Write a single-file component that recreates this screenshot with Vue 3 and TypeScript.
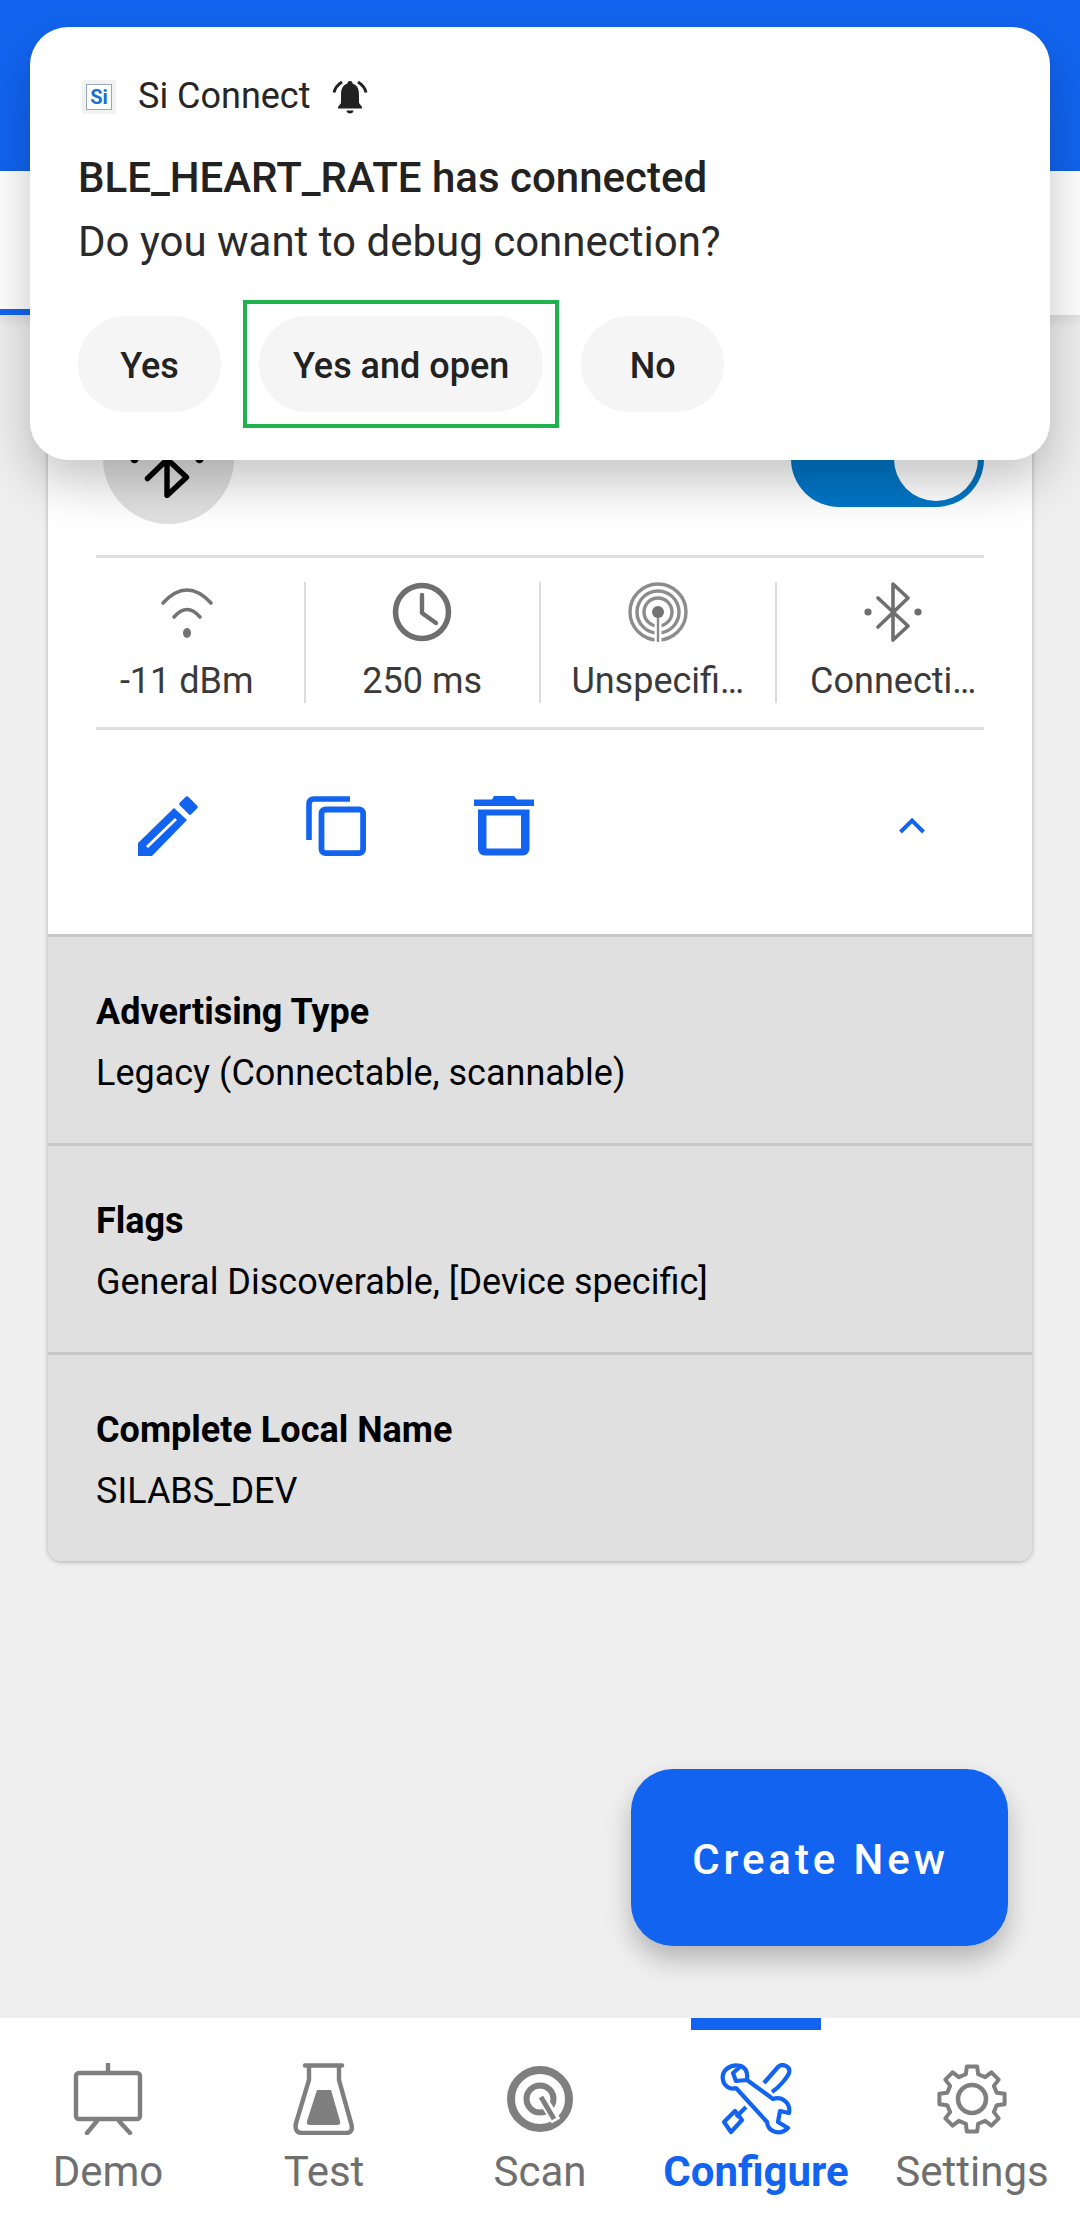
<script setup lang="ts">
const navItems: { key: string; label: string; active?: boolean }[] = [
  { key: 'demo', label: 'Demo' },
  { key: 'test', label: 'Test' },
  { key: 'scan', label: 'Scan' },
  { key: 'configure', label: 'Configure', active: true },
  { key: 'settings', label: 'Settings' },
]

const rows = [
  { title: 'Advertising Type', value: 'Legacy (Connectable, scannable)' },
  { title: 'Flags', value: 'General Discoverable, [Device specific]' },
  { title: 'Complete Local Name', value: 'SILABS_DEV' },
]

function polar(r: number, deg: number): string {
  const a = (deg * Math.PI) / 180
  return `${(36 + r * Math.cos(a)).toFixed(2)} ${(36 + r * Math.sin(a)).toFixed(2)}`
}

const gearPath = (() => {
  const pts: string[] = []
  for (let i = 0; i < 8; i++) {
    const a = i * 45 - 90
    pts.push(polar(25.5, a - 14), polar(33, a - 9), polar(33, a + 9), polar(25.5, a + 14))
  }
  return 'M' + pts.join(' L') + ' Z'
})()
</script>

<template>
  <div class="page">
    <header class="app-bar"></header>
    <div class="tab-strip"><div class="tab-line"></div></div>

    <main class="content">
      <section class="card">
        <div class="top-row">
          <div class="avatar">
            <svg class="bt-big" viewBox="0 0 60 60">
              <path d="M15 16 L45 44 L30 58 V2 L45 16 L15 45" fill="none" stroke="#000" stroke-width="4.2" stroke-linejoin="round" stroke-linecap="round" />
              <circle cx="5" cy="30" r="3.2" fill="#000" />
              <circle cx="55" cy="30" r="3.2" fill="#000" />
            </svg>
          </div>
          <div class="toggle"><div class="knob"></div></div>
        </div>

        <div class="stats-wrap">
          <div class="stats">
            <div class="stat">
              <svg class="stat-icon" viewBox="0 0 60 60">
                <path d="M6 21 Q30 -5 54 21" fill="none" stroke="#737373" stroke-width="3.6" stroke-linecap="round" />
                <path d="M17 35 Q30 20 43 35" fill="none" stroke="#737373" stroke-width="3.6" stroke-linecap="round" />
                <ellipse cx="30" cy="51" rx="4" ry="5" fill="#737373" />
              </svg>
              <span class="stat-text">-11 dBm</span>
            </div>
            <div class="stat">
              <svg class="stat-icon" viewBox="0 0 60 60">
                <circle cx="30" cy="30" r="26.5" fill="none" stroke="#6e6e6e" stroke-width="5.5" />
                <path d="M30 13 V31 L44 41" fill="none" stroke="#6e6e6e" stroke-width="4.4" stroke-linecap="round" stroke-linejoin="round" />
              </svg>
              <span class="stat-text">250 ms</span>
            </div>
            <div class="stat">
              <svg class="stat-icon" viewBox="0 0 60 60">
                <g fill="none" stroke="#8c8c8c" stroke-width="3.4">
                  <circle cx="30" cy="30" r="28" />
                  <circle cx="30" cy="30" r="21" />
                  <circle cx="30" cy="30" r="14" />
                </g>
                <path d="M30 36 V60" stroke="#fff" stroke-width="7" />
                <path d="M30 32 V60" stroke="#8c8c8c" stroke-width="2.4" />
                <circle cx="30" cy="30" r="6" fill="#737373" />
              </svg>
              <span class="stat-text">Unspecifi…</span>
            </div>
            <div class="stat">
              <svg class="stat-icon" viewBox="0 0 60 60">
                <path d="M15 16 L45 44 L30 58 V2 L45 16 L15 45" fill="none" stroke="#6e6e6e" stroke-width="3.6" stroke-linejoin="round" stroke-linecap="round" />
                <circle cx="5" cy="30" r="3.6" fill="#6e6e6e" />
                <circle cx="55" cy="30" r="3.6" fill="#6e6e6e" />
              </svg>
              <span class="stat-text">Connecti…</span>
            </div>
          </div>
        </div>

        <div class="actions">
          <svg class="action" viewBox="0 0 60 60">
            <path fill-rule="evenodd" fill="#1264f0" d="M0 47 L36 12 L49 24 L14 60 H0 Z M8 50 L10 52 L39 24 L37 22 Z" />
            <path d="M43 8 L49 2 L58 11 L52 17 Z" fill="#1264f0" stroke="#1264f0" stroke-width="3.5" stroke-linejoin="round" />
          </svg>
          <svg class="action" viewBox="0 0 60 60">
            <path d="M3 44 V8 Q3 3 8 3 H44" fill="none" stroke="#1264f0" stroke-width="5.6" />
            <rect x="15.5" y="13.5" width="41.6" height="43.6" rx="4" fill="none" stroke="#1264f0" stroke-width="5.8" />
          </svg>
          <svg class="action" viewBox="0 0 60 60">
            <path d="M0 3.5 H18 L20 0 H40 L43 3.5 H60 V10 H0 Z" fill="#1264f0" />
            <path fill-rule="evenodd" fill="#1264f0" d="M4 13.5 H55.5 V53 A6.5 6.5 0 0 1 49 59.5 H10.5 A6.5 6.5 0 0 1 4 53 Z M12.5 19.5 V52.5 H47 V19.5 Z" />
          </svg>
          <svg class="chevron" viewBox="0 0 28 17">
            <path d="M2.5 15 L14 3.5 L25.5 15" fill="none" stroke="#1264f0" stroke-width="4" />
          </svg>
        </div>

        <div v-for="row in rows" :key="row.title" class="detail">
          <div class="detail-title">{{ row.title }}</div>
          <div class="detail-value">{{ row.value }}</div>
        </div>
      </section>

      <button class="fab">Create New</button>
    </main>

    <nav class="nav">
      <div v-for="item in navItems" :key="item.key" class="nav-item" :class="{ active: item.active }">
        <div v-if="item.active" class="nav-indicator"></div>
        <svg class="nav-icon" viewBox="0 0 72 72">
          <template v-if="item.key === 'demo'">
            <g fill="none" stroke="#7f7f7f" stroke-width="4.4" stroke-linecap="round">
              <rect x="4" y="10" width="64" height="46" rx="3" />
              <path d="M36 1 V10" />
              <path d="M25 58 L15 70" />
              <path d="M47 58 L58 70" />
            </g>
          </template>
          <template v-else-if="item.key === 'test'">
            <g fill="none" stroke="#7f7f7f" stroke-width="4.4">
              <path d="M17 2.5 H54" stroke-linecap="round" />
              <path d="M21 3 V17 L8 60 Q6 70 14 70 H58 Q66 70 63 60 L51 17 V3" />
            </g>
            <path d="M29 27 H43 L52 58 Q53 62 49 62 H22 Q18 62 19 58 Z" fill="#7f7f7f" />
          </template>
          <template v-else-if="item.key === 'scan'">
            <circle cx="36" cy="36" r="29" fill="none" stroke="#7f7f7f" stroke-width="8" />
            <circle cx="36" cy="36" r="13.5" fill="none" stroke="#7f7f7f" stroke-width="6" />
            <path d="M38 35 L52 58" stroke="#fff" stroke-width="10" />
            <path d="M37 34 L50 56" stroke="#7f7f7f" stroke-width="5" />
          </template>
          <template v-else-if="item.key === 'configure'">
            <g fill="none" stroke="#1264f0" stroke-width="4.2" stroke-linejoin="round">
              <path d="M21 3 L13 10 L16 18 L27 17 C28 9 26 5 21 3 C10 0 1 8 3 17 C4 23 10 27 16 25 L47 59 C48 69 60 73 68 65 L58 59 L60 48 L69 50 C71 40 62 33 53 36 L27 17" />
              <path d="M44 20 L58 4 C62 0 71 3 69 10 C68 13 60 24 52 29" />
              <path d="M26 44 L16 54 M4 59 L11 69 L22 57 L15 48 Z" />
            </g>
          </template>
          <template v-else>
            <path :d="gearPath" fill="none" stroke="#7f7f7f" stroke-width="4" stroke-linejoin="round" />
            <circle cx="36" cy="36" r="14" fill="none" stroke="#7f7f7f" stroke-width="4.6" />
          </template>
        </svg>
        <span class="nav-label">{{ item.label }}</span>
      </div>
    </nav>

    <aside class="notice">
      <div class="notice-head">
        <div class="app-icon"><span class="app-icon-in">Si</span></div>
        <span class="app-name">Si Connect</span>
        <svg class="bell" viewBox="0 0 36 36">
          <path d="M18 2 C16 2 15.5 3 15.5 4.5 C10.5 6 9 10.5 9 16 V24 L6 28 V29.5 H30 V28 L27 24 V16 C27 10.5 25.5 6 20.5 4.5 C20.5 3 20 2 18 2 Z" fill="#222" />
          <path d="M14.5 31.5 H21.5 C21.5 35.5 14.5 35.5 14.5 31.5 Z" fill="#222" />
          <path d="M10 3 C6 5.5 3 9 2 13.5 M26 3 C30 5.5 33 9 34 13.5" fill="none" stroke="#222" stroke-width="3" />
        </svg>
      </div>
      <h2 class="notice-title">BLE_HEART_RATE has connected</h2>
      <p class="notice-body">Do you want to debug connection?</p>
      <div class="notice-actions">
        <button class="pill">Yes</button>
        <button class="pill pill-marked">Yes and open</button>
        <button class="pill">No</button>
      </div>
    </aside>
  </div>
</template>

<style>
html,
body {
  margin: 0;
  padding: 0;
}
</style>

<style scoped>
.page {
  position: relative;
  width: 1080px;
  height: 2231px;
  display: flex;
  flex-direction: column;
  overflow: hidden;
  background: #f0eff0;
  font-family: Roboto, "Liberation Sans", sans-serif;
}
.app-bar {
  height: 171px;
  flex: none;
  background: #1264f0;
}
.tab-strip {
  height: 144px;
  flex: none;
  position: relative;
  background: #fff;
  display: flex;
  align-items: flex-end;
  box-shadow: 0 4px 14px rgba(0, 0, 0, 0.1);
  z-index: 1;
}
.tab-line {
  width: 216px;
  height: 6px;
  background: #1264f0;
}
.content {
  flex: 1;
  position: relative;
  padding: 30px 48px 0;
}
.card {
  background: #fff;
  border-radius: 14px;
  overflow: hidden;
  box-shadow: 0 1px 5px rgba(0, 0, 0, 0.28);
}
.top-row {
  height: 210px;
  box-sizing: border-box;
  padding: 48px 48px 0 55px;
  display: flex;
  justify-content: space-between;
  align-items: flex-start;
}
.avatar {
  width: 131px;
  height: 131px;
  border-radius: 50%;
  background: #e0e0e0;
  display: flex;
  align-items: center;
  justify-content: center;
}
.bt-big {
  width: 78px;
  height: 78px;
  margin-right: 4px;
}
.toggle {
  margin-top: 18px;
  width: 193px;
  height: 96px;
  box-sizing: border-box;
  padding: 6px;
  border-radius: 48px;
  background: #0077c8;
  display: flex;
  justify-content: flex-end;
}
.knob {
  width: 84px;
  height: 84px;
  border-radius: 50%;
  background: #fff;
}
.stats-wrap {
  margin: 0 48px;
  border-top: 3px solid #dedede;
  border-bottom: 3px solid #dedede;
}
.stats {
  margin: 0 -26px 0 -28px;
  display: grid;
  grid-template-columns: repeat(4, 1fr);
  padding: 24px 0;
}
.stat {
  height: 121px;
  display: flex;
  flex-direction: column;
  align-items: center;
  border-left: 2px solid #dcdcdc;
  box-sizing: border-box;
}
.stat:first-child {
  border-left-color: transparent;
}
.stat-icon {
  width: 60px;
  height: 60px;
  flex: none;
}
.stat-text {
  margin-top: 17px;
  font-size: 36px;
  line-height: 44px;
  color: #3a3a3a;
  white-space: nowrap;
}
.actions {
  height: 204px;
  box-sizing: border-box;
  padding: 66px 106px 0 90px;
  display: flex;
  align-items: flex-start;
  gap: 108px;
}
.action {
  width: 60px;
  height: 60px;
  flex: none;
}
.chevron {
  width: 28px;
  height: 17px;
  margin-top: 21px;
  margin-left: auto;
}
.detail {
  height: 209px;
  box-sizing: border-box;
  border-top: 3px solid #c8c8c8;
  background: #e0e0e0;
  padding: 45px 48px 0;
  color: #000;
}
.detail-title {
  font-size: 36px;
  line-height: 60px;
  font-weight: 700;
}
.detail-value {
  font-size: 36px;
  line-height: 62px;
}
.fab {
  position: absolute;
  left: 631px;
  top: 1454px;
  width: 377px;
  height: 177px;
  padding: 4px 0 0 2px;
  border: 0;
  border-radius: 42px;
  background: #1264f0;
  color: #fff;
  font-family: inherit;
  font-size: 42px;
  font-weight: 500;
  letter-spacing: 3.9px;
  box-shadow: 0 14px 26px rgba(0, 0, 0, 0.24);
}
.nav {
  height: 213px;
  flex: none;
  position: relative;
  background: #fff;
  display: grid;
  grid-template-columns: repeat(5, 216px);
}
.nav-item {
  position: relative;
  padding-top: 45px;
  display: flex;
  flex-direction: column;
  align-items: center;
}
.nav-indicator {
  position: absolute;
  top: 0;
  left: 43px;
  width: 130px;
  height: 12px;
  background: #1264f0;
}
.nav-icon {
  width: 72px;
  height: 72px;
  flex: none;
}
.nav-label {
  margin-top: 12px;
  font-size: 42px;
  line-height: 50px;
  color: #6f6f6f;
  white-space: nowrap;
}
.active .nav-label {
  color: #1264f0;
  font-weight: 700;
}
.notice {
  position: absolute;
  z-index: 3;
  left: 30px;
  top: 27px;
  width: 1020px;
  height: 433px;
  box-sizing: border-box;
  padding: 52px 48px 0;
  border-radius: 38px;
  background: #fff;
  box-shadow: 0 22px 50px rgba(0, 0, 0, 0.23);
}
.notice-head {
  height: 35px;
  display: flex;
  align-items: center;
}
.app-icon {
  margin-left: 4px;
  width: 34px;
  height: 34px;
  flex: none;
  box-sizing: border-box;
  padding: 4px;
  background: #f2f2f2;
  border-radius: 2px;
  display: flex;
}
.app-icon-in {
  flex: 1;
  border: 1px solid #9aa5c0;
  background: #fff;
  color: #1c6fd0;
  font-size: 20px;
  line-height: 24px;
  font-weight: 700;
  text-align: center;
}
.app-name {
  margin-left: 22px;
  font-size: 36px;
  line-height: 35px;
  color: #262626;
}
.bell {
  margin-left: 21px;
  width: 36px;
  height: 36px;
}
.notice-title {
  margin: 39px 0 0;
  font-size: 42px;
  line-height: 50px;
  font-weight: 500;
  color: #222;
}
.notice-body {
  margin: 7px 0 0;
  font-size: 42px;
  line-height: 64px;
  color: #2a2a2a;
}
.notice-actions {
  margin: 42px 0 0;
  display: flex;
  gap: 38px;
}
.pill {
  position: relative;
  height: 96px;
  min-width: 143px;
  padding: 4px 34px 0;
  border: 0;
  border-radius: 48px;
  background: #f5f5f5;
  color: #222;
  font-family: inherit;
  font-size: 36px;
  font-weight: 500;
}
.pill-marked::after {
  content: "";
  position: absolute;
  inset: -16px;
  border: 4px solid #20b24f;
}
</style>
